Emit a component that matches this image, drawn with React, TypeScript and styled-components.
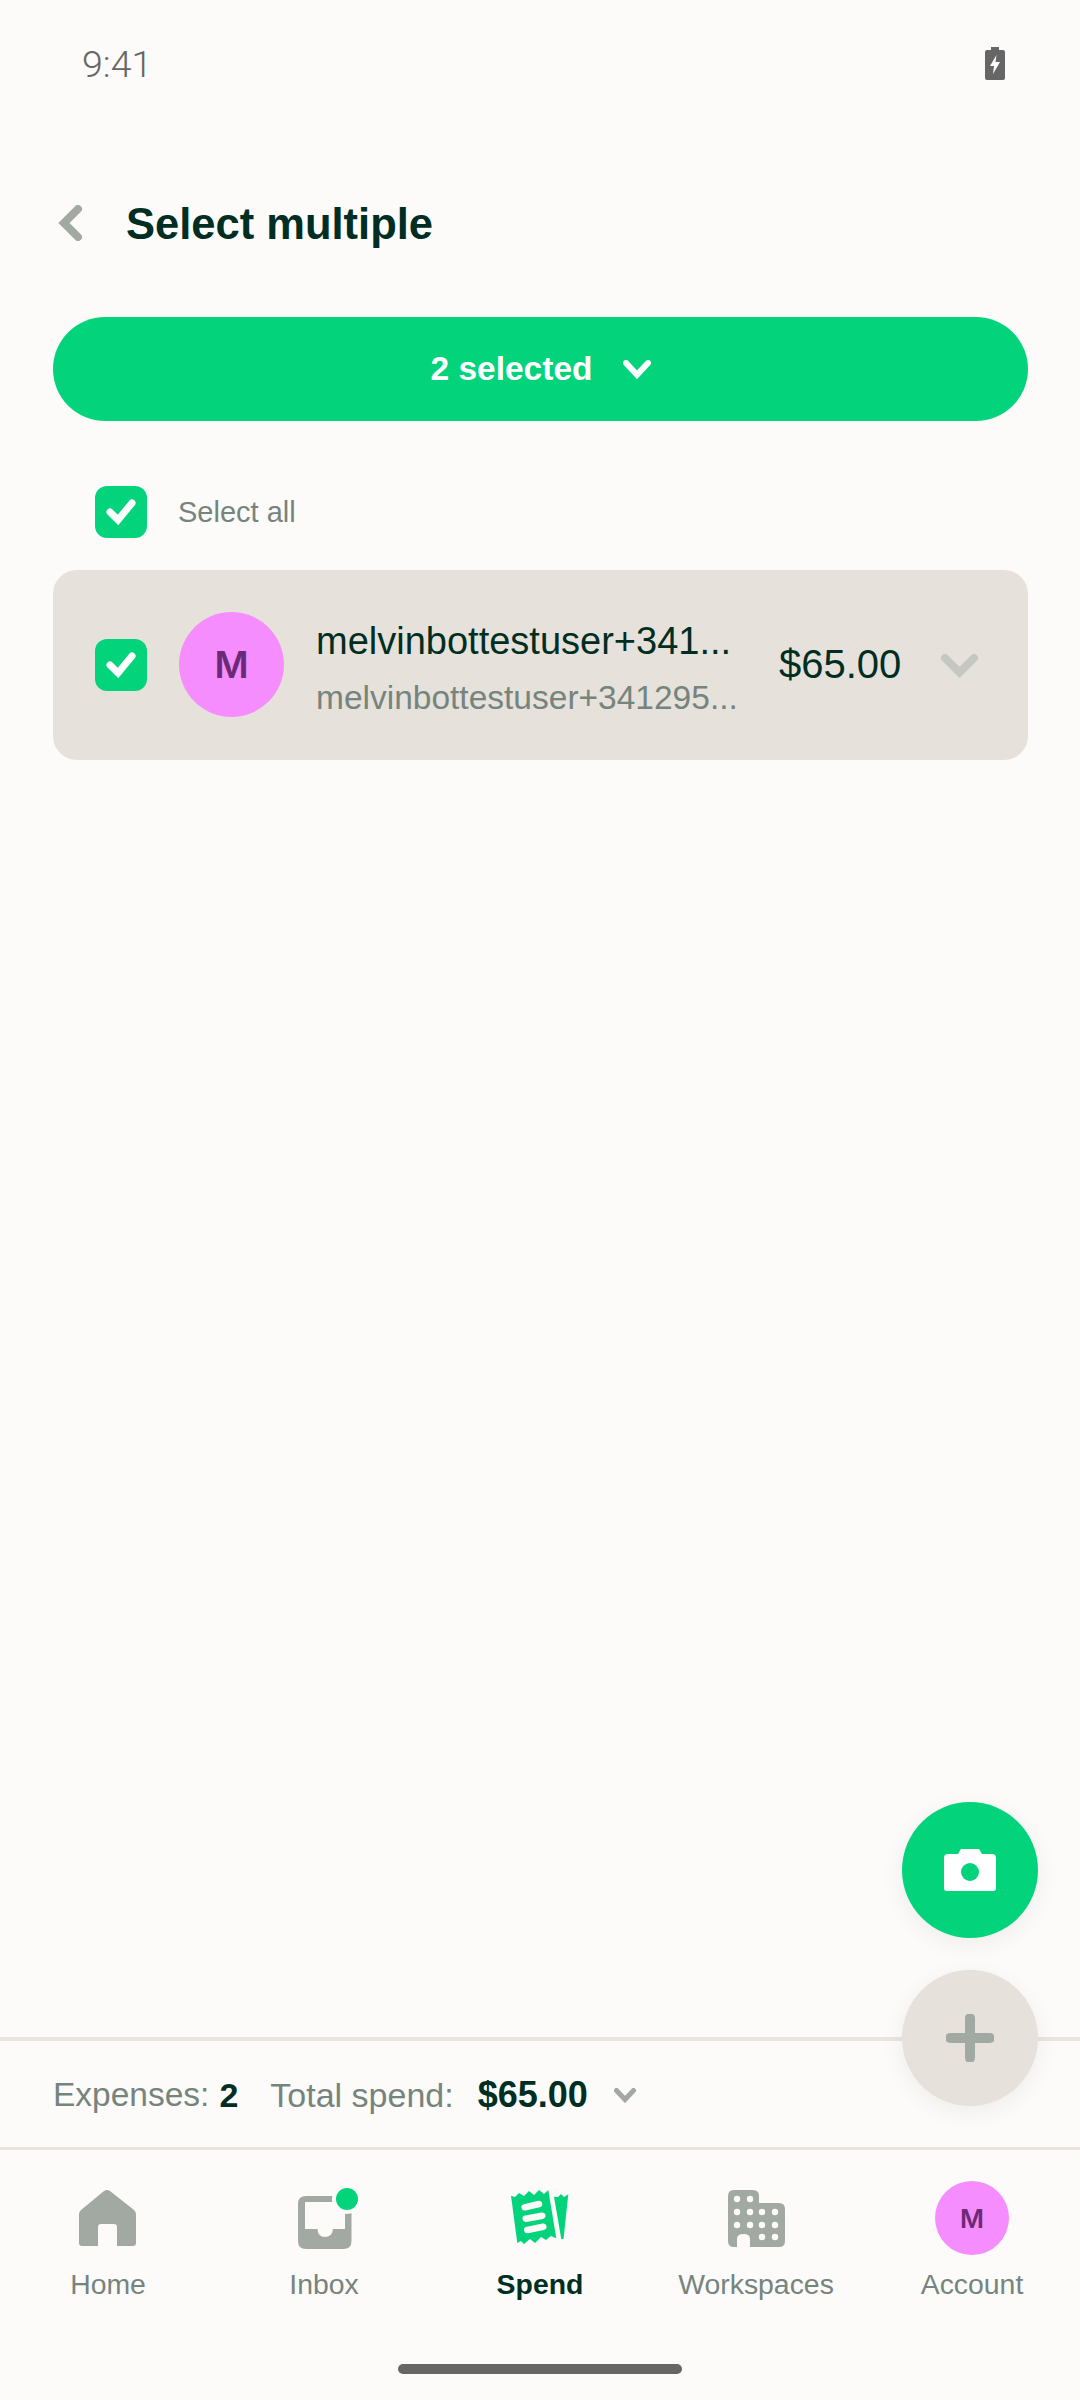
import styled, { createGlobalStyle } from "styled-components";

const GlobalStyle = createGlobalStyle`
  html, body {
    margin: 0;
    padding: 0;
    background: #fcfbf9;
    font-family: "Liberation Sans", Arial, sans-serif;
  }
`;

const GREEN = "#03d47c";
const DARK = "#002e22";
const MUTED = "#76847e";
const ICON = "#a2a9a3";
const BG = "#fcfbf9";
const BORDER = "#e9e5de";

const Page = styled.div`
  position: relative;
  width: 1080px;
  height: 2400px;
  display: flex;
  flex-direction: column;
  overflow: hidden;
  background: ${BG};
`;

const StatusBar = styled.div`
  height: 126px;
  display: flex;
  align-items: center;
  justify-content: space-between;
  padding: 0 75px 0 82px;
  box-sizing: border-box;
`;

const Clock = styled.span`
  font-family: Roboto, sans-serif;
  font-weight: 300;
  font-size: 37.5px;
  line-height: 44px;
  padding-top: 2px;
  color: #666666;
`;

const Header = styled.div`
  height: 191px;
  box-sizing: border-box;
  padding: 2px 0 0 58px;
  display: flex;
  align-items: center;
  gap: 43px;
`;

const Title = styled.h1`
  margin: 3px 0 0;
  font-size: 43.5px;
  font-weight: 700;
  color: ${DARK};
`;

const SelectedButton = styled.div`
  height: 104px;
  margin: 0 52px 0 53px;
  border-radius: 52px;
  background: ${GREEN};
  display: flex;
  align-items: center;
  justify-content: center;
  gap: 30px;
  color: #ffffff;
  font-size: 33.5px;
  font-weight: 700;
`;

const SelectAllRow = styled.div`
  display: flex;
  align-items: center;
  gap: 31px;
  padding: 65px 0 32px 95px;
  font-size: 29px;
  color: ${MUTED};
`;

const Checkbox = styled.div`
  width: 52px;
  height: 52px;
  flex: none;
  border-radius: 12px;
  background: ${GREEN};
  display: flex;
  align-items: center;
  justify-content: center;
`;

const ExpenseCard = styled.div`
  height: 190px;
  box-sizing: border-box;
  margin: 0 52px 0 53px;
  padding: 0 0 1px 42px;
  border-radius: 24px;
  background: #e6e1da;
  display: flex;
  align-items: center;
`;

const Avatar = styled.div<{ $size: number; $font: number }>`
  width: ${(p) => p.$size}px;
  height: ${(p) => p.$size}px;
  flex: none;
  border-radius: 50%;
  background: #f68dfe;
  color: #6b2a78;
  font-family: Inter, sans-serif;
  font-size: ${(p) => p.$font}px;
  font-weight: 600;
  display: flex;
  align-items: center;
  justify-content: center;
`;

const CardAvatar = styled(Avatar)`
  margin-left: 32px;
`;

const CardText = styled.div`
  width: 463px;
  margin-left: 32px;
  padding-top: 8px;
  display: flex;
  flex-direction: column;
  gap: 17px;
`;

const CardTitle = styled.div`
  font-size: 38px;
  line-height: 42px;
  color: ${DARK};
`;

const CardSubtitle = styled.div`
  font-size: 33.5px;
  line-height: 38px;
  color: ${MUTED};
`;

const CardAmount = styled.div`
  width: 162px;
  font-size: 40px;
  color: ${DARK};
`;

const CardChevron = styled.div`
  display: flex;
  margin-top: 2px;
`;

const Spacer = styled.div`
  flex: 1;
`;

const SummaryBar = styled.div`
  height: 104px;
  padding: 2px 0 0 53px;
  display: flex;
  align-items: center;
  border-top: 4px solid ${BORDER};
  border-bottom: 3px solid ${BORDER};
  font-size: 33.5px;
  color: ${MUTED};
`;

const SummaryCount = styled.b`
  margin-left: 10px;
  font-size: 34px;
  color: ${DARK};
`;

const SummaryLabel = styled.span`
  margin-left: 32px;
  font-size: 34px;
`;

const SummaryTotal = styled.b`
  margin: 0 26px 0 24px;
  font-size: 36px;
  color: ${DARK};
`;

const TabBar = styled.div`
  height: 250px;
  display: flex;
  flex-direction: column;
`;

const Tabs = styled.div`
  display: grid;
  grid-template-columns: repeat(5, 216px);
  padding-top: 31px;
`;

const Tab = styled.div`
  display: flex;
  flex-direction: column;
  align-items: center;
`;

const TabIcon = styled.div`
  height: 74px;
  display: flex;
  align-items: center;
  justify-content: center;
`;

const TabLabel = styled.div<{ $active?: boolean }>`
  margin-top: 12px;
  line-height: 34px;
  font-size: 28.4px;
  font-weight: ${(p) => (p.$active ? 700 : 400)};
  color: ${(p) => (p.$active ? DARK : MUTED)};
`;

const HomeIndicator = styled.div`
  width: 284px;
  height: 10px;
  margin: auto auto 26px;
  border-radius: 5px;
  background: #666666;
`;

const FabStack = styled.div`
  position: absolute;
  right: 42px;
  bottom: 294px;
  display: flex;
  flex-direction: column;
  gap: 32px;
`;

const Fab = styled.div<{ $bg: string }>`
  width: 136px;
  height: 136px;
  border-radius: 50%;
  background: ${(p) => p.$bg};
  box-shadow: 0 6px 24px rgba(0, 0, 0, 0.06);
  display: flex;
  align-items: center;
  justify-content: center;
`;

const Chevron = ({ width, height, color, stroke }: { width: number; height: number; color: string; stroke: number }) => (
  <svg width={width} height={height} viewBox={`0 0 ${width} ${height}`} fill="none">
    <path
      d={`M${stroke / 2} ${stroke / 2} L${width / 2} ${height - stroke * 0.7} L${width - stroke / 2} ${stroke / 2}`}
      stroke={color}
      strokeWidth={stroke}
      strokeLinecap="round"
      strokeLinejoin="miter"
    />
  </svg>
);

const Check = () => (
  <svg width="30" height="26" viewBox="0 0 30 26" fill="none">
    <path d="M4 13 L12 21 L26 4" stroke="#fff" strokeWidth="7" strokeLinecap="round" />
  </svg>
);

const BatteryIcon = () => (
  <svg width="20" height="33" viewBox="0 0 20 33">
    <path d="M6 0 H14 V3 H18 Q20 3 20 5 V31 Q20 33 18 33 H2 Q0 33 0 31 V5 Q0 3 2 3 H6 Z" fill="#666" />
    <path d="M11.5 8 L5 19 H9 L8 27 L15 15 H10.5 Z" fill="#fff" />
  </svg>
);

const BackIcon = () => (
  <svg width="25" height="36" viewBox="0 0 25 36" fill="none">
    <path d="M20 4 L6 18 L20 32" stroke={ICON} strokeWidth="8" strokeLinecap="round" strokeLinejoin="miter" />
  </svg>
);

const CameraIcon = () => (
  <svg width="52" height="42" viewBox="0 0 52 42">
    <path d="M4 5 H14 L17 0 H35 L38 5 H48 Q52 5 52 9 V39 Q52 42 49 42 H3 Q0 42 0 39 V9 Q0 5 4 5 Z" fill="#fff" />
    <circle cx="26" cy="23" r="9" fill={GREEN} />
  </svg>
);

const PlusIcon = () => (
  <svg width="48" height="48" viewBox="0 0 48 48" fill="none">
    <path d="M24 4 V44 M4 24 H44" stroke={ICON} strokeWidth="10" strokeLinecap="round" />
  </svg>
);

const HomeIcon = () => (
  <svg width="58" height="56" viewBox="0 0 58 56">
    <path
      d="M25 1 Q28 -1 31 1 L55 20 Q57 22 57 24 V53 Q57 56 54 56 H38 V37 Q38 34 35 34 H22 Q19 34 19 37 V56 H3 Q0 56 0 53 V24 Q0 22 2 20 Z"
      fill={ICON}
    />
  </svg>
);

const InboxIcon = () => (
  <svg width="60" height="61" viewBox="0 0 60 61" style={{ marginLeft: 7 }}>
    <path
      fillRule="evenodd"
      d="M8 8 H45.5 Q53.5 8 53.5 16 V53 Q53.5 61 45.5 61 H8 Q0 61 0 53 V16 Q0 8 8 8 Z M7 14 V41 H19.5 Q20 49 27 49 Q34 49 35 41 H47 V14 Z"
      fill={ICON}
    />
    <circle cx="49" cy="11" r="15" fill={BG} />
    <circle cx="49" cy="11" r="11" fill={GREEN} />
  </svg>
);

const SpendIcon = () => (
  <svg width="58" height="56" viewBox="0 0 58 56">
    <path
      d="M0 5.7 L4 7 L8 3 L13 6 L18 1 L23 5 L28 0 L33 4 L37.3 0 L45.3 48.3 L40 46 L35 50 L30 47 L24 53 L19 49 L13 54 L10 51 L6.3 53 Z"
      fill={GREEN}
    />
    <path d="M43 6.7 L47 7 L50 4 L53 7 L57.3 4.3 L52.5 49 L50.3 49.3 Z" fill={GREEN} />
    <path d="M13.7 17.3 L28 14 M14.7 28.7 L31.3 25.7 M16.3 40 L32.3 36.7" stroke={BG} strokeWidth="6.5" strokeLinecap="round" />
  </svg>
);

const WorkspacesIcon = () => {
  const windows = [
    [9, 9], [22, 9],
    [9, 22], [22, 22], [34, 22], [47, 22],
    [9, 35], [22, 35], [34, 35], [47, 35],
    [34, 47], [47, 47],
  ];
  return (
    <svg width="57" height="57" viewBox="0 0 57 57">
      <path
        d="M6 0 H25 Q31 0 31 6 V13 H51 Q57 13 57 19 V51 Q57 57 51 57 H22 V49 Q22 44 15.5 44 Q9 44 9 49 V57 H6 Q0 57 0 51 V6 Q0 0 6 0 Z"
        fill={ICON}
      />
      {windows.map(([cx, cy]) => (
        <circle key={`${cx}-${cy}`} cx={cx} cy={cy} r="3.2" fill={BG} />
      ))}
    </svg>
  );
};

const App = () => {
  return (
    <Page>
      <GlobalStyle />
      <StatusBar>
        <Clock>9:41</Clock>
        <BatteryIcon />
      </StatusBar>
      <Header>
        <BackIcon />
        <Title>Select multiple</Title>
      </Header>
      <SelectedButton>
        <span>2 selected</span>
        <Chevron width={28} height={19} color="#fff" stroke={6} />
      </SelectedButton>
      <SelectAllRow>
        <Checkbox>
          <Check />
        </Checkbox>
        <span>Select all</span>
      </SelectAllRow>
      <ExpenseCard>
        <Checkbox>
          <Check />
        </Checkbox>
        <CardAvatar $size={105} $font={37}>M</CardAvatar>
        <CardText>
          <CardTitle>melvinbottestuser+341...</CardTitle>
          <CardSubtitle>melvinbottestuser+341295...</CardSubtitle>
        </CardText>
        <CardAmount>$65.00</CardAmount>
        <CardChevron>
          <Chevron width={37} height={24} color="#c5c8c1" stroke={8} />
        </CardChevron>
      </ExpenseCard>
      <Spacer />
      <SummaryBar>
        <span>Expenses:</span>
        <SummaryCount>2</SummaryCount>
        <SummaryLabel>Total spend:</SummaryLabel>
        <SummaryTotal>$65.00</SummaryTotal>
        <Chevron width={22} height={15} color={ICON} stroke={5} />
      </SummaryBar>
      <TabBar>
        <Tabs>
          <Tab>
            <TabIcon><HomeIcon /></TabIcon>
            <TabLabel>Home</TabLabel>
          </Tab>
          <Tab>
            <TabIcon><InboxIcon /></TabIcon>
            <TabLabel>Inbox</TabLabel>
          </Tab>
          <Tab>
            <TabIcon><SpendIcon /></TabIcon>
            <TabLabel $active>Spend</TabLabel>
          </Tab>
          <Tab>
            <TabIcon><WorkspacesIcon /></TabIcon>
            <TabLabel>Workspaces</TabLabel>
          </Tab>
          <Tab>
            <TabIcon><Avatar $size={74} $font={26}>M</Avatar></TabIcon>
            <TabLabel>Account</TabLabel>
          </Tab>
        </Tabs>
        <HomeIndicator />
      </TabBar>
      <FabStack>
        <Fab $bg={GREEN}><CameraIcon /></Fab>
        <Fab $bg="#e6e1da"><PlusIcon /></Fab>
      </FabStack>
    </Page>
  );
};

export default App;
